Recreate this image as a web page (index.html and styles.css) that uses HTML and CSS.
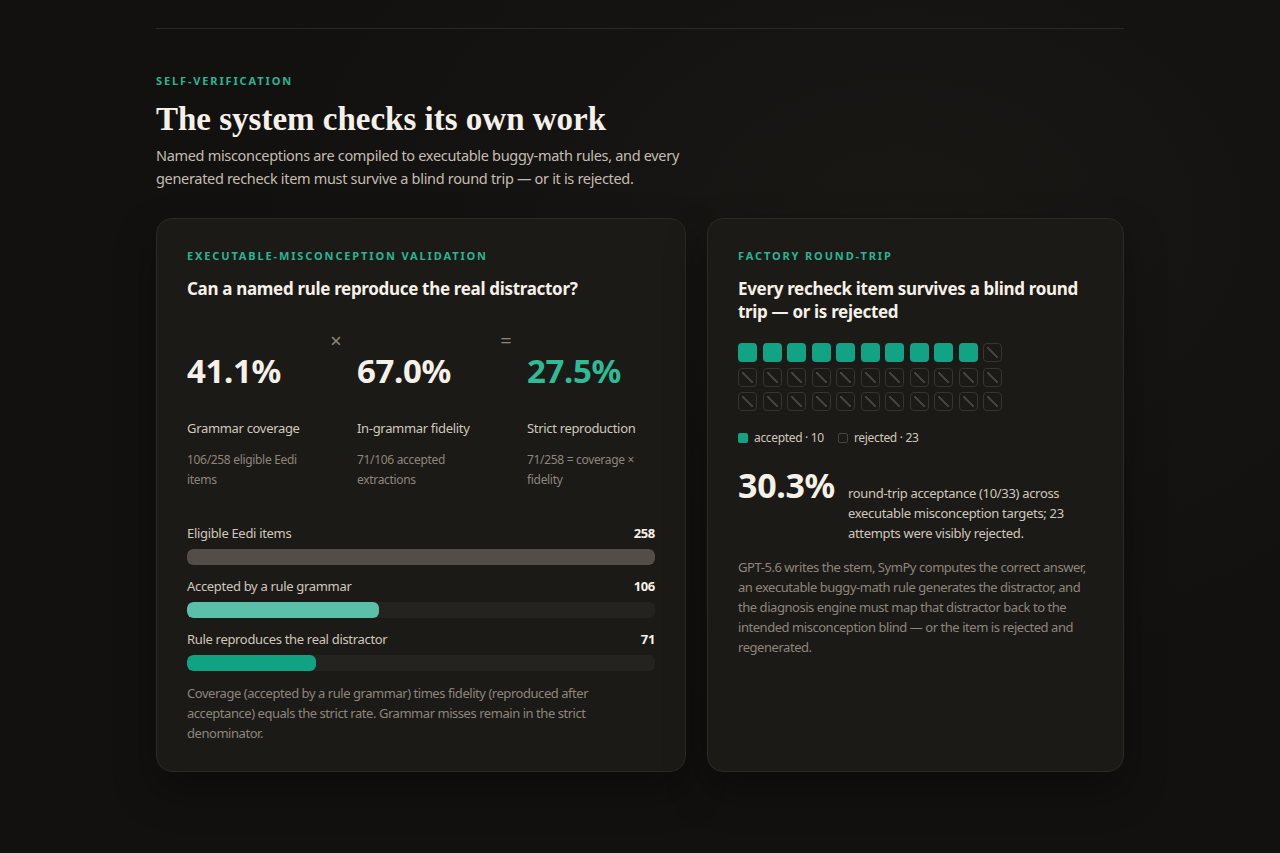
FILE: index.html
```html
<!DOCTYPE html>
<html lang="en">
<head>
<meta charset="utf-8">
<title>Self-verification</title>
<link rel="stylesheet" href="styles.css">
</head>
<body>
<div class="page">
  <div class="rule"></div>
  <section class="section">
    <div class="eyebrow">SELF-VERIFICATION</div>
    <h2 class="title">The system checks its own work</h2>
    <p class="lede">Named misconceptions are compiled to executable buggy-math rules, and every generated recheck item must survive a blind round trip — or it is rejected.</p>

    <div class="cards">
      <article class="card">
        <div class="card-eyebrow">EXECUTABLE-MISCONCEPTION VALIDATION</div>
        <h3 class="card-title">Can a named rule reproduce the real distractor?</h3>

        <div class="stats">
          <div class="stat">
            <div class="stat-num">41.1%</div>
            <div class="stat-label">Grammar coverage</div>
            <div class="stat-sub">106/258 eligible Eedi items</div>
          </div>
          <div class="op">×</div>
          <div class="stat">
            <div class="stat-num">67.0%</div>
            <div class="stat-label">In-grammar fidelity</div>
            <div class="stat-sub">71/106 accepted extractions</div>
          </div>
          <div class="op">=</div>
          <div class="stat">
            <div class="stat-num accent">27.5%</div>
            <div class="stat-label">Strict reproduction</div>
            <div class="stat-sub">71/258 = coverage × fidelity</div>
          </div>
        </div>

        <div class="bars">
          <div class="bar-row">
            <div class="bar-head"><span>Eligible Eedi items</span><b>258</b></div>
            <div class="track"><div class="fill fill-grey" style="width:100%"></div></div>
          </div>
          <div class="bar-row">
            <div class="bar-head"><span>Accepted by a rule grammar</span><b>106</b></div>
            <div class="track"><div class="fill fill-light" style="width:41.09%"></div></div>
          </div>
          <div class="bar-row">
            <div class="bar-head"><span>Rule reproduces the real distractor</span><b>71</b></div>
            <div class="track"><div class="fill fill-teal" style="width:27.52%"></div></div>
          </div>
        </div>

        <p class="note">Coverage (accepted by a rule grammar) times fidelity (reproduced after acceptance) equals the strict rate. Grammar misses remain in the strict denominator.</p>
      </article>

      <article class="card">
        <div class="card-eyebrow">FACTORY ROUND-TRIP</div>
        <h3 class="card-title">Every recheck item survives a blind round trip — or is rejected</h3>

        <div class="cells">
          <span class="cell ok"></span><span class="cell ok"></span><span class="cell ok"></span><span class="cell ok"></span><span class="cell ok"></span><span class="cell ok"></span><span class="cell ok"></span><span class="cell ok"></span><span class="cell ok"></span><span class="cell ok"></span>
          <span class="cell no"></span>
          <span class="cell no"></span><span class="cell no"></span><span class="cell no"></span><span class="cell no"></span><span class="cell no"></span><span class="cell no"></span><span class="cell no"></span><span class="cell no"></span><span class="cell no"></span><span class="cell no"></span><span class="cell no"></span>
          <span class="cell no"></span><span class="cell no"></span><span class="cell no"></span><span class="cell no"></span><span class="cell no"></span><span class="cell no"></span><span class="cell no"></span><span class="cell no"></span><span class="cell no"></span><span class="cell no"></span><span class="cell no"></span>
        </div>

        <div class="legend">
          <span class="key"><i class="swatch swatch-ok"></i>accepted · 10</span>
          <span class="key"><i class="swatch swatch-no"></i>rejected · 23</span>
        </div>

        <div class="big">
          <div class="big-num">30.3%</div>
          <p class="big-text">round-trip acceptance (10/33) across executable misconception targets; 23 attempts were visibly rejected.</p>
        </div>

        <p class="note">GPT-5.6 writes the stem, SymPy computes the correct answer, an executable buggy-math rule generates the distractor, and the diagnosis engine must map that distractor back to the intended misconception blind — or the item is rejected and regenerated.</p>
      </article>
    </div>
  </section>
</div>
</body>
</html>
```
FILE: styles.css
```css
* { box-sizing: border-box; }

html, body {
  margin: 0;
  padding: 0;
}

body {
  min-height: 853px;
  background-color: #121110;
  background-image: radial-gradient(ellipse 700px 500px at 900px 220px, #191815 0%, #141311 55%, #121110 100%);
  color: #f3efe8;
  font-family: "Noto Sans", "Open Sans", sans-serif;
  letter-spacing: -0.02em;
}

.page {
  width: 968px;
  margin: 0 auto;
  padding-top: 28px;
}

.rule {
  border-top: 1px solid #2a2824;
}

.section {
  padding-top: 45px;
  padding-bottom: 60px;
}

.eyebrow,
.card-eyebrow {
  font-size: 11px;
  line-height: 14px;
  font-weight: 700;
  letter-spacing: 0.17em;
  color: #2ab592;
}

.title {
  margin: 13px 0 0;
  font-family: "Liberation Serif", "Times New Roman", serif;
  font-size: 33px;
  line-height: 37px;
  font-weight: 700;
  letter-spacing: 0;
  color: #f6f1e8;
}

.lede {
  margin: 6px 0 0;
  max-width: 545px;
  font-size: 14.5px;
  line-height: 23px;
  color: #c4bdb1;
}

.cards {
  display: grid;
  grid-template-columns: 530fr 417fr;
  gap: 21px;
  margin-top: 28px;
}

.card {
  background: #1c1a17;
  border: 1px solid #2c2a26;
  border-radius: 16px;
  padding: 30px 30px 28px;
  box-shadow: 0 18px 40px rgba(0, 0, 0, 0.35);
}

.card-title {
  margin: 14px 0 0;
  font-size: 17px;
  line-height: 23px;
  font-weight: 700;
  color: #f6f1e8;
}

.stats {
  display: grid;
  grid-template-columns: 1fr 42px 1fr 42px 1fr;
  margin-top: 20px;
}

.op {
  text-align: center;
  font-size: 20px;
  line-height: 20px;
  margin-top: 11px;
  color: #8e887e;
  letter-spacing: 0;
}

.stat {
  padding-top: 32px;
}

.stat-num {
  font-size: 33px;
  line-height: 38px;
  font-weight: 700;
  color: #f6f1e8;
}

.stat-num.accent {
  color: #2fbb96;
}

.stat-label {
  margin-top: 28px;
  font-size: 13px;
  line-height: 20px;
  color: #cfc8bc;
}

.stat-sub {
  margin-top: 12px;
  font-size: 12px;
  line-height: 20px;
  color: #8c867c;
}

.bars {
  display: flex;
  flex-direction: column;
  gap: 11px;
  margin-top: 33px;
}

.bar-head {
  display: flex;
  justify-content: space-between;
  font-size: 13px;
  line-height: 20px;
  color: #cfc8bc;
}

.bar-head b {
  color: #f6f1e8;
  font-weight: 700;
}

.track {
  margin-top: 6px;
  height: 16px;
  border-radius: 6px;
  background: #252320;
  overflow: hidden;
}

.fill {
  height: 100%;
  border-radius: 6px;
}

.fill-grey { background: #524d47; }
.fill-light { background: #5bbfaa; }
.fill-teal { background: #0fa383; }

.note {
  margin: 12px 0 0;
  font-size: 13px;
  line-height: 20px;
  letter-spacing: -0.035em;
  color: #8c867c;
}

.cells {
  display: grid;
  grid-template-columns: repeat(11, 19px);
  grid-auto-rows: 19px;
  column-gap: 5.5px;
  row-gap: 5.5px;
  margin-top: 20px;
}

.cell {
  position: relative;
  border-radius: 4px;
}

.cell.ok {
  background: #11a384;
}

.cell.no {
  border: 1px solid #38352f;
}

.cell.no::after {
  content: "";
  position: absolute;
  inset: 3px;
  background: linear-gradient(45deg, transparent calc(50% - 1px), #45413a calc(50% - 1px), #45413a calc(50% + 1px), transparent calc(50% + 1px));
}

.legend {
  display: flex;
  gap: 14px;
  margin-top: 19px;
  font-size: 12px;
  line-height: 16px;
  color: #cfc8bc;
}

.key {
  display: flex;
  align-items: center;
  gap: 6px;
}

.swatch {
  width: 10px;
  height: 10px;
  border-radius: 2px;
}

.swatch-ok { background: #11a384; }
.swatch-no { border: 1px solid #48443d; }

.big {
  display: flex;
  align-items: baseline;
  gap: 13px;
  margin-top: 19px;
}

.big-num {
  font-size: 34px;
  line-height: 40px;
  font-weight: 700;
  color: #f6f1e8;
  flex: none;
}

.big-text {
  margin: 0;
  font-size: 13px;
  line-height: 20px;
  color: #cfc8bc;
}

.big + .note {
  margin-top: 14px;
}
```
